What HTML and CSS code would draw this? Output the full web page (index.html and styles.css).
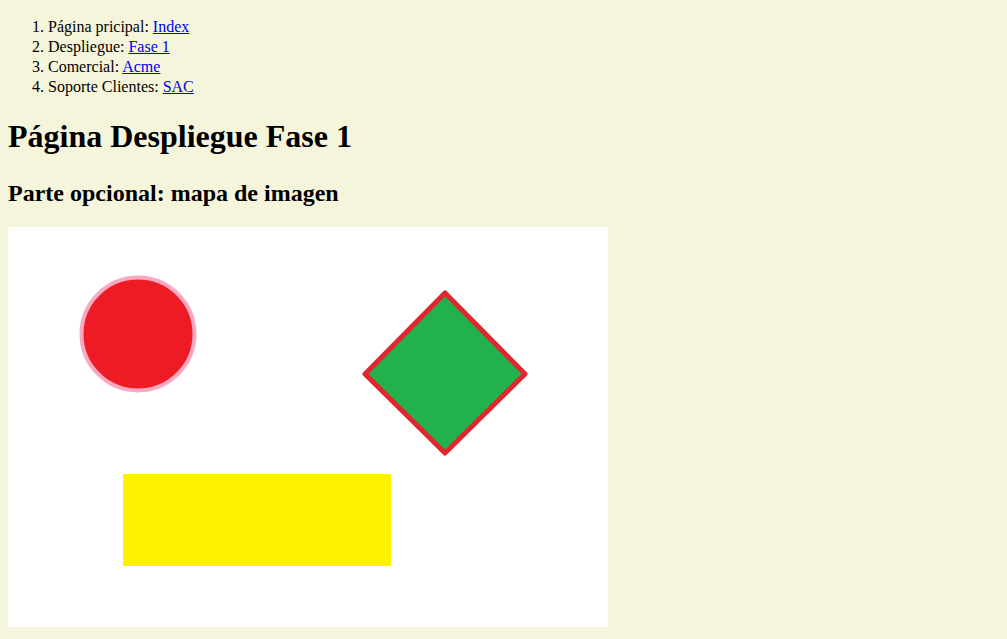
FILE: index.html
```html
<!DOCTYPE html>
<html lang="es">
<head>
<meta charset="utf-8">
<title>Página Despliegue Fase 1</title>
<link rel="stylesheet" href="styles.css">
</head>
<body>
<ol class="nav">
  <li>Página pricipal: <a href="#">Index</a></li>
  <li>Despliegue: <a href="#">Fase 1</a></li>
  <li>Comercial: <a href="#">Acme</a></li>
  <li>Soporte Clientes: <a href="#">SAC</a></li>
</ol>
<h1 class="title">Página Despliegue Fase 1</h1>
<h2 class="subtitle">Parte opcional: mapa de imagen</h2>
<div class="map">
  <svg width="600" height="400" viewBox="0 0 600 400" xmlns="http://www.w3.org/2000/svg">
    <rect width="600" height="400" fill="#ffffff"/>
    <circle cx="130" cy="107" r="56.5" fill="#ed1c24" stroke="#f9a9c2" stroke-width="4"/>
    <polygon points="437,66 517,147 437,226 357,147" fill="#22b14c" stroke="#e1262d" stroke-width="5" stroke-linejoin="round"/>
    <rect x="115" y="247" width="268" height="92" fill="#fff200"/>
  </svg>
</div>
</body>
</html>
```

FILE: styles.css
```css
html {
  background: #f5f5dc;
}
body {
  margin: 8px;
  font-family: "Liberation Serif", "Times New Roman", serif;
  font-size: 16px;
  color: #000;
  background: #f5f5dc;
}
.nav {
  margin: 9px 0 16px;
  padding-left: 40px;
}
.nav li {
  line-height: 20px;
}
.nav a {
  color: #0000ee;
}
.title {
  font-size: 32px;
  line-height: 40px;
  margin: 19px 0 22px;
}
.subtitle {
  font-size: 24px;
  line-height: 30px;
  margin: 20px 0 19px;
}
.map {
  width: 600px;
  height: 400px;
}
.map svg {
  display: block;
}
```
